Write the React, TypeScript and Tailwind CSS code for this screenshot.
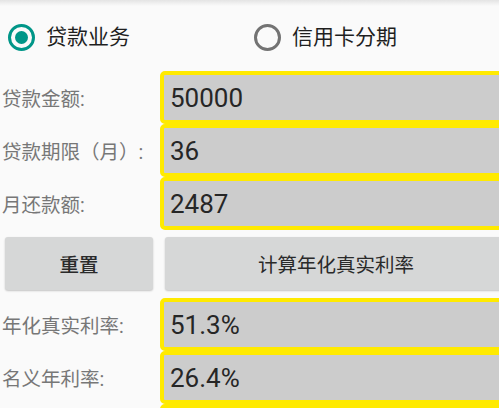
import React from "react";

const font = "font-['Roboto','Noto_Sans_CJK_SC',sans-serif]";

function Field({ label, value }: { label: string; value: string }) {
  return (
    <div className="flex h-[53px] items-center">
      <div className="w-[160px] shrink-0 pl-[2px] pt-[5px] text-[19.5px] leading-none text-[#777777] whitespace-nowrap">
        {label}
      </div>
      <div className="flex h-[53px] flex-1 items-center rounded-[5px] border-4 border-[#ffea00] bg-[#cccccc] pl-[6px]">
        <span className="text-[26px] leading-none text-[#262626]">{value}</span>
      </div>
    </div>
  );
}

function Radio({ checked, label }: { checked: boolean; label: string }) {
  return (
    <div className="flex items-center gap-[11px]">
      <div
        className={
          checked
            ? "flex h-[27px] w-[27px] items-center justify-center rounded-full border-[3px] border-[#009688]"
            : "flex h-[27px] w-[27px] items-center justify-center rounded-full border-[3px] border-[#737373]"
        }
      >
        {checked && <div className="h-[13px] w-[13px] rounded-full bg-[#009688]" />}
      </div>
      <span className="text-[21px] leading-none text-[#1f1f1f]">{label}</span>
    </div>
  );
}

export default function App() {
  return (
    <div className={`relative h-[408px] w-[499px] overflow-hidden bg-[#fafafa] ${font}`}>
      <div className="pointer-events-none absolute inset-x-0 top-0 h-[6px] bg-gradient-to-b from-[#e4e4e4] to-[#fafafa]" />
      <div className="w-[507px]">
        <div className="flex h-[71px] items-center pt-[3px]">
          <div className="w-[254px] pl-[8px]">
            <Radio checked label="贷款业务" />
          </div>
          <Radio checked={false} label="信用卡分期" />
        </div>
        <Field label="贷款金额:" value="50000" />
        <Field label="贷款期限（月）:" value="36" />
        <Field label="月还款额:" value="2487" />
        <div className="mt-[7px] mb-[8px] flex h-[53px] gap-[12px] pl-[5px]">
          <button className="w-[148px] rounded-[3px] bg-[#d6d7d7] pt-[4px] text-[19.5px] font-medium text-[#2a2a2a] shadow-[0_1px_2px_rgba(0,0,0,0.22)]">
            重置
          </button>
          <button className="flex-1 rounded-[3px] bg-[#d6d7d7] pt-[4px] text-[19.5px] text-[#2a2a2a] shadow-[0_1px_2px_rgba(0,0,0,0.22)]">
            计算年化真实利率
          </button>
        </div>
        <Field label="年化真实利率:" value="51.3%" />
        <Field label="名义年利率:" value="26.4%" />
        <Field label="" value="" />
      </div>
    </div>
  );
}
